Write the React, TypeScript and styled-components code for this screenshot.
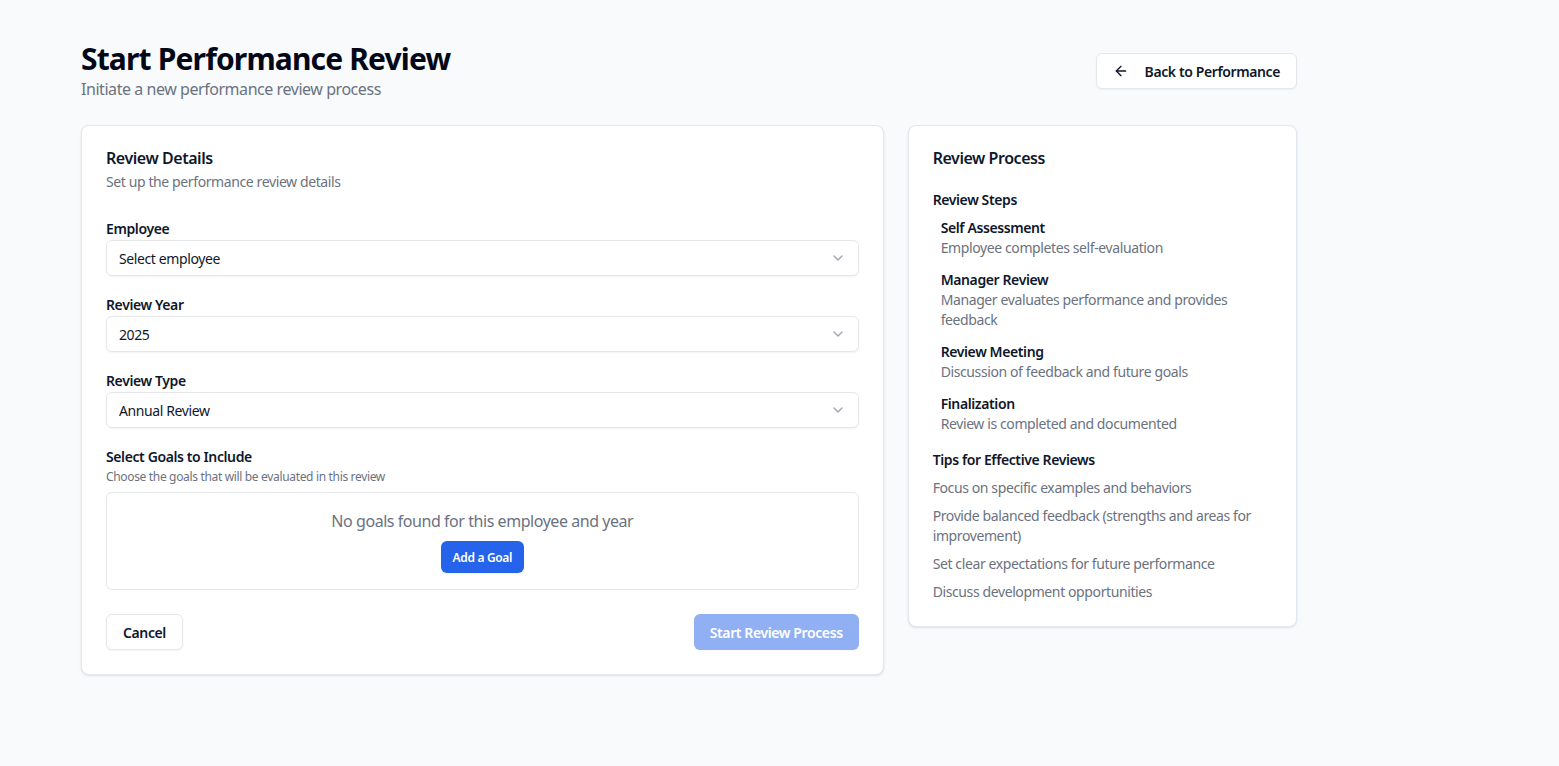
import React from "react";
import styled, { createGlobalStyle } from "styled-components";
import { ArrowLeft, ChevronDown } from "lucide-react";

const GlobalStyle = createGlobalStyle`
  * { box-sizing: border-box; letter-spacing: -0.028em; }
  html, body { margin: 0; padding: 0; }
  body {
    background: #f8fafc;
    font-family: "Noto Sans", "Open Sans", sans-serif;
    color: #0f172a;
    -webkit-font-smoothing: antialiased;
  }
  button { font-family: inherit; }
`;

const Page = styled.div`
  min-height: 766px;
  padding: 41px 0 40px 81px;
`;

const Container = styled.div`
  width: 1216px;
`;

const Header = styled.header`
  display: flex;
  align-items: center;
  justify-content: space-between;
  margin-bottom: 24px;
`;

const TitleBlock = styled.div`
  display: flex;
  flex-direction: column;
`;

const PageTitle = styled.h1`
  margin: 0;
  font-size: 30px;
  line-height: 36px;
  font-weight: 700;
  color: #020817;
`;

const PageSubtitle = styled.p`
  margin: 0;
  font-size: 16px;
  line-height: 24px;
  color: #6b7280;
`;

const OutlineButton = styled.button`
  display: inline-flex;
  align-items: center;
  gap: 16px;
  height: 36px;
  padding: 0 16px;
  background: #ffffff;
  border: 1px solid #e5e7eb;
  border-radius: 6px;
  box-shadow: 0 1px 2px rgba(0, 0, 0, 0.05);
  font-size: 14px;
  font-weight: 600;
  color: #0f172a;
  cursor: pointer;
`;

const Grid = styled.div`
  display: grid;
  grid-template-columns: repeat(3, minmax(0, 1fr));
  gap: 24px;
  align-items: start;
`;

const Card = styled.section<{ $span?: number }>`
  grid-column: span ${(p) => p.$span ?? 1};
  background: #ffffff;
  border: 1px solid #e2e8f0;
  border-radius: 8px;
  box-shadow: 0 1px 3px rgba(0, 0, 0, 0.08), 0 1px 2px rgba(0, 0, 0, 0.04);
  padding: 23px 24px 24px;
`;

const CardTitle = styled.h2`
  margin: 0;
  font-size: 16px;
  line-height: 18px;
  font-weight: 600;
  color: #0f172a;
`;

const CardDescription = styled.p`
  margin: 5px 0 0;
  font-size: 14px;
  line-height: 20px;
  color: #6b7280;
`;

const Form = styled.div`
  margin-top: 27px;
  display: flex;
  flex-direction: column;
  gap: 19px;
`;

const Field = styled.div`
  display: flex;
  flex-direction: column;
  gap: 1px;
`;

const Label = styled.label`
  font-size: 14px;
  line-height: 20px;
  font-weight: 600;
  color: #0f172a;
`;

const Hint = styled.p`
  margin: 1px 0 6px;
  font-size: 12px;
  line-height: 16px;
  color: #6b7280;
`;

const SelectTrigger = styled.button`
  display: flex;
  align-items: center;
  justify-content: space-between;
  width: 100%;
  height: 36px;
  padding: 0 12px;
  background: #ffffff;
  border: 1px solid #e5e7eb;
  border-radius: 6px;
  box-shadow: 0 1px 2px rgba(0, 0, 0, 0.05);
  font-size: 14px;
  color: #0f172a;
  text-align: left;
  cursor: pointer;

  svg {
    color: #9ca3af;
  }
`;

const EmptyGoals = styled.div`
  display: flex;
  flex-direction: column;
  align-items: center;
  gap: 8px;
  padding: 16px;
  border: 1px solid #e5e7eb;
  border-radius: 6px;
`;

const EmptyText = styled.p`
  margin: 0;
  font-size: 16px;
  line-height: 24px;
  color: #6b7280;
`;

const PrimaryButton = styled.button<{ $size?: "sm" | "md"; $disabled?: boolean }>`
  display: inline-flex;
  align-items: center;
  justify-content: center;
  height: ${(p) => (p.$size === "sm" ? "32px" : "36px")};
  padding: 0 ${(p) => (p.$size === "sm" ? "12px" : "16px")};
  background: #2563eb;
  border: none;
  border-radius: 6px;
  color: #ffffff;
  font-size: ${(p) => (p.$size === "sm" ? "12px" : "14px")};
  font-weight: 600;
  opacity: ${(p) => (p.$disabled ? 0.5 : 1)};
  box-shadow: 0 1px 2px rgba(0, 0, 0, 0.05);
  cursor: ${(p) => (p.$disabled ? "default" : "pointer")};
`;

const Footer = styled.div`
  display: flex;
  justify-content: space-between;
  align-items: center;
  margin-top: 24px;
`;

const SectionHeading = styled.h3<{ $gap?: number }>`
  margin: ${(p) => p.$gap ?? 0}px 0 0;
  font-size: 14px;
  line-height: 20px;
  font-weight: 600;
  color: #0f172a;
`;

const StepList = styled.ol`
  list-style: none;
  margin: 8px 0 0;
  padding: 0 0 0 8px;
  display: flex;
  flex-direction: column;
  gap: 12px;
`;

const Step = styled.li`
  display: flex;
  flex-direction: column;
  font-size: 14px;
  line-height: 20px;
`;

const StepTitle = styled.span`
  font-size: 14px;
  line-height: 20px;
  font-weight: 600;
  color: #0f172a;
`;

const StepDesc = styled.span`
  font-size: 14px;
  line-height: 20px;
  color: #6b7280;
`;

const TipList = styled.ul`
  list-style: none;
  margin: 8px 0 0;
  padding: 0;
  display: flex;
  flex-direction: column;
  gap: 8px;
`;

const Tip = styled.li`
  font-size: 14px;
  line-height: 20px;
  color: #6b7280;
`;

const steps = [
  { title: "Self Assessment", desc: "Employee completes self-evaluation" },
  { title: "Manager Review", desc: "Manager evaluates performance and provides feedback" },
  { title: "Review Meeting", desc: "Discussion of feedback and future goals" },
  { title: "Finalization", desc: "Review is completed and documented" },
];

const tips = [
  "Focus on specific examples and behaviors",
  "Provide balanced feedback (strengths and areas for improvement)",
  "Set clear expectations for future performance",
  "Discuss development opportunities",
];

const fields = [
  { label: "Employee", value: "Select employee" },
  { label: "Review Year", value: "2025" },
  { label: "Review Type", value: "Annual Review" },
];

export default function App() {
  return (
    <>
      <GlobalStyle />
      <Page>
        <Container>
          <Header>
            <TitleBlock>
              <PageTitle>Start Performance Review</PageTitle>
              <PageSubtitle>Initiate a new performance review process</PageSubtitle>
            </TitleBlock>
            <OutlineButton>
              <ArrowLeft size={16} strokeWidth={2} />
              Back to Performance
            </OutlineButton>
          </Header>

          <Grid>
            <Card $span={2}>
              <CardTitle>Review Details</CardTitle>
              <CardDescription>Set up the performance review details</CardDescription>
              <Form>
                {fields.map((f) => (
                  <Field key={f.label}>
                    <Label>{f.label}</Label>
                    <SelectTrigger>
                      <span>{f.value}</span>
                      <ChevronDown size={16} strokeWidth={2} />
                    </SelectTrigger>
                  </Field>
                ))}
                <Field>
                  <Label>Select Goals to Include</Label>
                  <Hint>Choose the goals that will be evaluated in this review</Hint>
                  <EmptyGoals>
                    <EmptyText>No goals found for this employee and year</EmptyText>
                    <PrimaryButton $size="sm">Add a Goal</PrimaryButton>
                  </EmptyGoals>
                </Field>
              </Form>
              <Footer>
                <OutlineButton>Cancel</OutlineButton>
                <PrimaryButton $disabled>Start Review Process</PrimaryButton>
              </Footer>
            </Card>

            <Card>
              <CardTitle>Review Process</CardTitle>
              <SectionHeading $gap={23}>Review Steps</SectionHeading>
              <StepList>
                {steps.map((s) => (
                  <Step key={s.title}>
                    <StepTitle>{s.title}</StepTitle>
                    <StepDesc>{s.desc}</StepDesc>
                  </Step>
                ))}
              </StepList>
              <SectionHeading $gap={16}>Tips for Effective Reviews</SectionHeading>
              <TipList>
                {tips.map((t) => (
                  <Tip key={t}>{t}</Tip>
                ))}
              </TipList>
            </Card>
          </Grid>
        </Container>
      </Page>
    </>
  );
}
